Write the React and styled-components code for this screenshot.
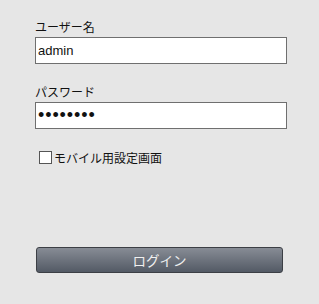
import React, { useState } from 'react'
import styled, { createGlobalStyle } from 'styled-components'

const GlobalStyle = createGlobalStyle`
  html, body {
    margin: 0;
    padding: 0;
    background: #e6e6e6;
    font-family: "Liberation Sans", "Noto Sans CJK JP", sans-serif;
  }
`;

const Page = styled.div`
  width: 319px;
  height: 304px;
  background: #e6e6e6;
  padding: 19px 0 0 35px;
  box-sizing: border-box;
`;

const Field = styled.div`
  display: flex;
  flex-direction: column;
  width: 252px;
  margin-bottom: 20px;
`;

const Label = styled.label`
  font-family: "Noto Sans CJK JP", sans-serif;
  font-size: 12px;
  line-height: 16px;
  color: #111;
  margin-bottom: 2px;
`;

const Input = styled.input`
  box-sizing: border-box;
  width: 252px;
  height: 27px;
  margin: 0;
  padding: 0 2px;
  border: 1px solid #6f6f6f;
  border-radius: 0;
  background: #fff;
  font-family: "Liberation Sans", sans-serif;
  font-size: ${(props) => (props.type === 'password' ? '18px' : '13px')};
  letter-spacing: ${(props) => (props.type === 'password' ? '0.9px' : '0')};
  color: #111;
  outline: none;
`;

const CheckRow = styled.label`
  display: flex;
  align-items: center;
  gap: 2px;
  padding-left: 4px;
  margin-top: 1px;
  height: 16px;
  font-family: "Noto Sans CJK JP", sans-serif;
  font-size: 12px;
  color: #111;
`;

const Check = styled.input`
  appearance: none;
  box-sizing: border-box;
  width: 13px;
  height: 13px;
  margin: 0;
  border: 1px solid #555;
  background: #fff;
`;

const LoginButton = styled.button`
  display: block;
  box-sizing: border-box;
  width: 247px;
  height: 26px;
  margin: 82px 0 0 1px;
  border: 1px solid #3c3f45;
  border-radius: 3px;
  background: linear-gradient(#878c95, #535a65);
  color: #f0f0f0;
  font-family: "Noto Sans CJK JP", sans-serif;
  font-size: 13.5px;
  line-height: 24px;
  padding: 0;
`;

function App() {
  const [user, setUser] = useState('admin')
  const [pass, setPass] = useState('password')
  const [mobile, setMobile] = useState(false)

  return (
    <Page>
      <GlobalStyle />
      <Field>
        <Label>ユーザー名</Label>
        <Input value={user} onChange={(e) => setUser(e.target.value)} />
      </Field>
      <Field>
        <Label>パスワード</Label>
        <Input type="password" value={pass} onChange={(e) => setPass(e.target.value)} />
      </Field>
      <CheckRow>
        <Check type="checkbox" checked={mobile} onChange={(e) => setMobile(e.target.checked)} />
        モバイル用設定画面
      </CheckRow>
      <LoginButton>ログイン</LoginButton>
    </Page>
  )
}

export default App
